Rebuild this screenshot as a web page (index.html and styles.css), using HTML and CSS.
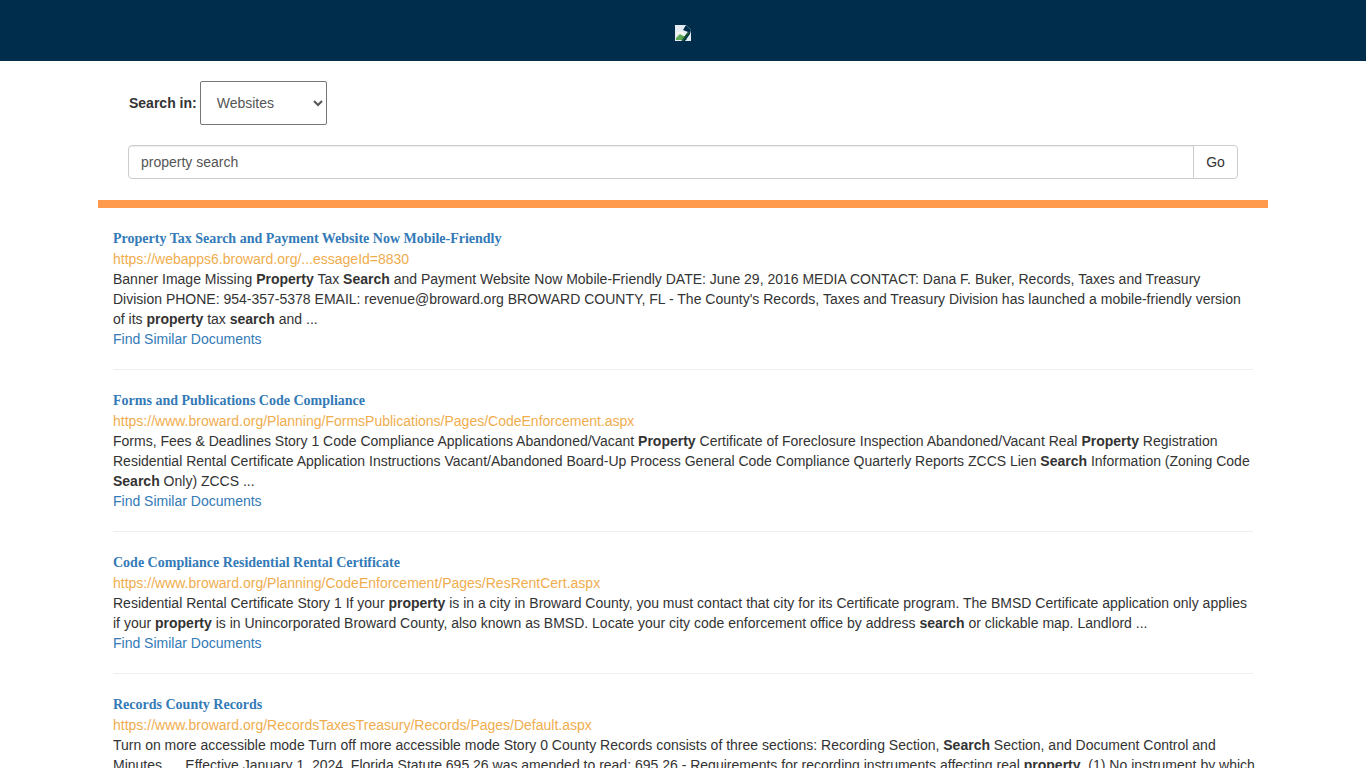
FILE: index.html
```html
<!DOCTYPE html>
<html lang="en">
<head>
    <meta charset="UTF-8">
    <meta name="viewport" content="width=device-width, initial-scale=1.0">
    <title>Search Results</title>
    <link rel="stylesheet" href="styles.css">
</head>
<body>
    <header class="top-bar">
        <svg class="broken-image" width="16" height="16" viewBox="0 0 16 16">
            <path d="M0 0H11L16 5V16H0Z" fill="#e6edf2"/>
            <path d="M1 13L5 9L9 11L12 15H1Z" fill="#5fa858"/>
            <path d="M1 9C3 6 6 6 9 8L11 12L5 9Z" fill="#f4f7f0"/>
            <path d="M11 0L8 5L13 7L9 12L8 16H10L15 9L16 5Z" fill="#002d4c"/>
            <path d="M14 7L7 16" stroke="#1d5a2c" stroke-width="1.5"/>
        </svg>
    </header>

    <div class="container">
        <form class="search-form">
            <div class="scope-row">
                <label class="scope-label" for="scope">Search in:</label>
                <select class="scope-select" id="scope">
                    <option>Websites</option>
                </select>
            </div>
            <div class="input-group">
                <input class="search-input" type="text" value="property search">
                <button class="go-button" type="button">Go</button>
            </div>
        </form>

        <div class="results">
            <div class="result">
                <a class="result-title" href="#">Property Tax Search and Payment Website Now Mobile-Friendly</a>
                <div class="result-url">https://webapps6.broward.org/...essageId=8830</div>
                <div class="result-text">Banner Image Missing <b>Property</b> Tax <b>Search</b> and Payment Website Now Mobile-Friendly DATE: June 29, 2016 MEDIA CONTACT: Dana F. Buker, Records, Taxes and Treasury Division PHONE: 954-357-5378 EMAIL: revenue@broward.org BROWARD COUNTY, FL - The County's Records, Taxes and Treasury Division has launched a mobile-friendly version of its <b>property</b> tax <b>search</b> and ...</div>
                <a class="similar-link" href="#">Find Similar Documents</a>
            </div>
            <div class="result">
                <a class="result-title" href="#">Forms and Publications Code Compliance</a>
                <div class="result-url">https://www.broward.org/Planning/FormsPublications/Pages/CodeEnforcement.aspx</div>
                <div class="result-text">Forms, Fees &amp; Deadlines Story 1 Code Compliance Applications Abandoned/Vacant <b>Property</b> Certificate of Foreclosure Inspection Abandoned/Vacant Real <b>Property</b> Registration Residential Rental Certificate Application Instructions Vacant/Abandoned Board-Up Process General Code Compliance Quarterly Reports ZCCS Lien <b>Search</b> Information (Zoning Code <b>Search</b> Only) ZCCS ...</div>
                <a class="similar-link" href="#">Find Similar Documents</a>
            </div>
            <div class="result">
                <a class="result-title" href="#">Code Compliance Residential Rental Certificate</a>
                <div class="result-url">https://www.broward.org/Planning/CodeEnforcement/Pages/ResRentCert.aspx</div>
                <div class="result-text">Residential Rental Certificate Story 1 If your <b>property</b> is in a city in Broward County, you must contact that city for its Certificate program. The BMSD Certificate application only applies if your <b>property</b> is in Unincorporated Broward County, also known as BMSD. Locate your city code enforcement office by address <b>search</b> or clickable map. Landlord ...</div>
                <a class="similar-link" href="#">Find Similar Documents</a>
            </div>
            <div class="result">
                <a class="result-title" href="#">Records County Records</a>
                <div class="result-url">https://www.broward.org/RecordsTaxesTreasury/Records/Pages/Default.aspx</div>
                <div class="result-text result-text-wide">Turn on more accessible mode Turn off more accessible mode Story 0 County Records consists of three sections: Recording Section, <b>Search</b> Section, and Document Control and Minutes. ... Effective January 1, 2024, Florida Statute 695.26 was amended to read: 695.26 - Requirements for recording instruments affecting real <b>property</b>. (1) No instrument by which ...</div>
                <a class="similar-link" href="#">Find Similar Documents</a>
            </div>
        </div>
    </div>
</body>
</html>
```

FILE: styles.css
```css
* {
    box-sizing: border-box;
}
html, body {
    height: 768px;
    overflow: hidden;
}
body {
    margin: 0;
    font-family: "Liberation Sans", Arial, sans-serif;
    font-size: 14px;
    line-height: 20px;
    color: #333;
    background-color: #fff;
}
a {
    color: #337ab7;
    text-decoration: none;
}
.top-bar {
    height: 61px;
    padding-top: 25px;
    background-color: #002d4c;
    text-align: center;
}
.broken-image {
    display: block;
    margin-left: 675px;
}
.container {
    width: 1170px;
    margin: 0 auto;
}
.search-form {
    padding: 20px 30px 21px;
}
.scope-row {
    display: flex;
    align-items: center;
    gap: 3px;
    margin-bottom: 20px;
    padding-left: 1px;
}
.scope-label {
    font-weight: bold;
}
.scope-select {
    width: 127px;
    height: 44px;
    padding: 0 12px;
    font-family: inherit;
    font-size: 14px;
    color: #555;
    background-color: #fff;
    border: 1px solid #767676;
    border-radius: 2px;
}
.input-group {
    display: flex;
    width: 1110px;
    height: 34px;
}
.search-input {
    flex: 1;
    padding: 6px 12px;
    font-family: inherit;
    font-size: 14px;
    color: #555;
    border: 1px solid #ccc;
    border-radius: 4px 0 0 4px;
    box-shadow: inset 0 1px 1px rgba(0,0,0,0.075);
}
.go-button {
    width: 45px;
    margin-left: -1px;
    font-family: inherit;
    font-size: 14px;
    color: #333;
    background-color: #fff;
    border: 1px solid #ccc;
    border-radius: 0 4px 4px 0;
}
.results {
    padding: 21px 15px 0;
    border-top: 8px solid #ff9a4d;
}
.result {
    padding-bottom: 20px;
    margin-bottom: 21px;
    border-bottom: 1px solid #eee;
}
.result-title {
    display: block;
    font-family: "Liberation Serif", "Times New Roman", serif;
    font-size: 14px;
    font-weight: bold;
}
.result-url {
    color: #f0ad4e;
}
/* last snippet needs a few px more to break where the original does */
.result-text-wide {
    margin-right: -3px;
}
.similar-link {
    display: block;
}
```
